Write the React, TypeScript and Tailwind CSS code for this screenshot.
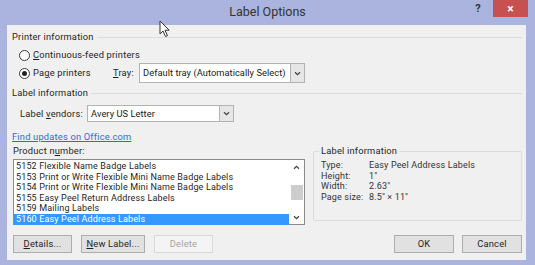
import React from "react";

const products = [
  "5152 Flexible Name Badge Labels",
  "5153 Print or Write Flexible Mini Name Badge Labels",
  "5154 Print or Write Flexible Mini Name Badge Labels",
  "5155 Easy Peel Return Address Labels",
  "5159 Mailing Labels",
  "5160 Easy Peel Address Labels",
];

const details = [
  ["Type:", "Easy Peel Address Labels"],
  ["Height:", "1\""],
  ["Width:", "2.63\""],
  ["Page size:", "8.5\" \u00d7 11\""],
];

const Chevron = ({ up = false }: { up?: boolean }) => (
  <svg width="7" height="5" viewBox="0 0 7 5" className={up ? "rotate-180" : ""}>
    <path d="M1 1.2 L3.5 3.7 L6 1.2" fill="none" stroke="#444" strokeWidth="1.3" />
  </svg>
);

const Radio = ({ checked }: { checked?: boolean }) => (
  <span className="flex h-[11px] w-[11px] items-center justify-center rounded-full border border-[#3b3b3b] bg-white">
    {checked && <span className="h-[5px] w-[5px] rounded-full bg-[#222]" />}
  </span>
);

// combo box with the grey drop button on the right
const Select = ({ value, className }: { value: string; className: string }) => (
  <div className={`flex border border-[#b3b3b3] bg-white ${className}`}>
    <span className="flex flex-1 items-center whitespace-nowrap pl-[3px] tracking-[0.05px] text-[#1a1a1a]">{value}</span>
    <span className="flex w-[14px] items-center justify-center border-l border-[#b3b3b3] bg-[#e6e6e6]">
      <Chevron />
    </span>
  </div>
);

const GroupHeader = ({ title }: { title: string }) => (
  <div className="flex h-[12px] items-center gap-[3px]">
    <span>{title}</span>
    <span className="h-px flex-1 bg-[#dcdcdc]" />
  </div>
);

const Button = ({
  children,
  className = "",
  disabled,
}: {
  children: React.ReactNode;
  className?: string;
  disabled?: boolean;
}) => (
  <div
    className={`flex h-[18px] items-center justify-center border ${
      disabled ? "border-[#d9d9d9] bg-[#f4f4f4] text-[#a3a3a3]" : "border-[#adadad] bg-[#e1e1e1]"
    } ${className}`}
  >
    {children}
  </div>
);

export default function App() {
  return (
    <div className="relative flex h-[265px] w-[535px] flex-col overflow-hidden whitespace-nowrap bg-[#aab4de] font-['Roboto',sans-serif] text-[9.3px] leading-[12px] tracking-[0.2px] text-[#1e1e1e]">
      {/* title bar */}
      <div className="grid h-[25px] grid-cols-[1fr_auto_1fr]">
        <div />
        <div className="flex items-center pb-[1px] text-[12.5px] tracking-normal text-[#333]">Label Options</div>
        <div className="flex items-start justify-end pr-[7px]">
          <span className="mt-[3px] mr-[12px] text-[11px] font-bold text-[#333]">?</span>
          <span className="flex h-[17px] w-[35px] items-center justify-center bg-[#c75050] text-[12px] font-bold text-white">
            ×
          </span>
        </div>
      </div>

      {/* client area */}
      <div className="ml-[7px] mr-[9px] flex h-[235px] flex-col bg-[#f0f0f0] pl-[5px] pr-[4px] pt-[6px]">
        <GroupHeader title="Printer information" />
        <div className="ml-[7px] mt-[6px] flex h-[12px] items-center gap-[3px]">
          <Radio />
          <span>
            <u>C</u>ontinuous-feed printers
          </span>
        </div>
        <div className="ml-[7px] mt-[2px] flex h-[20px] items-center">
          <Radio checked />
          <span className="ml-[3px] w-[80px]">
            Pa<u>g</u>e printers
          </span>
          <span className="w-[26px]">
            <u>T</u>ray:
          </span>
          <Select value="Default tray (Automatically Select)" className="h-[20px] w-[166px]" />
        </div>

        <div className="mt-[4px]">
          <GroupHeader title="Label information" />
        </div>
        <div className="ml-[8px] mt-[6px] flex h-[17px] items-center">
          <span className="w-[67px]">
            Label <u>v</u>endors:
          </span>
          <Select value="Avery US Letter" className="h-[17px] w-[147px]" />
        </div>
        <div className="mt-[9px] flex h-[12px] items-center">
          <span className="text-[#2b6fce] underline">Find updates on Office.com</span>
        </div>

        <div className="mt-[2px] flex">
          <div className="ml-[1px] flex w-[292px] flex-col">
            <div className="flex h-[12px] items-center">
              Product n<u>u</u>mber:
            </div>
            <div className="mt-[2px] flex h-[66px] border border-[#8c8c8c] bg-white">
              <div className="flex flex-1 flex-col pt-[1px] text-[9px] leading-[10.6px] tracking-[0.15px]">
                {products.map((p, i) => (
                  <div
                    key={p}
                    className={`h-[10.6px] pl-[2px] ${i === products.length - 1 ? "bg-[#3399ff] text-white" : ""}`}
                  >
                    {p}
                  </div>
                ))}
              </div>
              <div className="flex w-[15px] flex-col items-center">
                <div className="flex h-[14px] items-center">
                  <Chevron up />
                </div>
                <div className="mt-[11px] h-[15px] w-[12px] bg-[#cdcdcd]" />
                <div className="mt-auto flex h-[14px] items-center">
                  <Chevron />
                </div>
              </div>
            </div>
          </div>

          <fieldset className="ml-[8px] h-[76px] w-[209px] rounded-[2px] border border-[#dcdcdc] px-[7px]">
            <legend className="-ml-[2px] px-[2px]">Label information</legend>
            <div className="mt-[3px] flex flex-col text-[9px] leading-[10.6px] tracking-[0.15px] text-[#333]">
              {details.map(([k, v]) => (
                <div key={k} className="flex h-[10.6px]">
                  <span className="w-[48px]">{k}</span>
                  <span>{v}</span>
                </div>
              ))}
            </div>
          </fieldset>
        </div>

        <div className="mt-[10px] flex">
          <Button className="ml-[1px] w-[59px]">
            <u>D</u>etails...
          </Button>
          <Button className="ml-[9px] w-[64px]">
            <u>N</u>ew Label...
          </Button>
          <Button className="ml-[9px] w-[59px]" disabled>
            Delete
          </Button>
          <Button className="ml-auto w-[60px] border-[#5c9ee6]">OK</Button>
          <Button className="ml-[8px] w-[60px]">Cancel</Button>
        </div>
      </div>

      {/* mouse pointer over the title bar */}
      <svg className="absolute left-[159px] top-[20px]" width="12" height="18" viewBox="0 0 12 18">
        <path
          d="M1 1 L1 14 L4 11 L6.5 16.5 L8.5 15.6 L6 10.2 L10.2 10.2 Z"
          fill="white"
          stroke="#333"
          strokeWidth="1"
          strokeLinejoin="round"
        />
      </svg>
    </div>
  );
}
